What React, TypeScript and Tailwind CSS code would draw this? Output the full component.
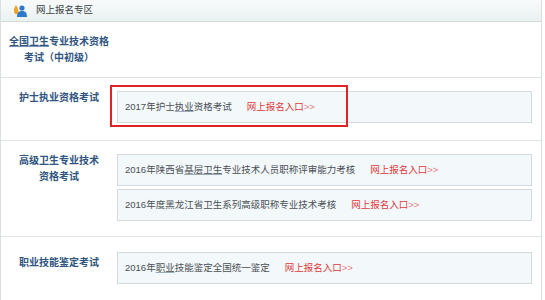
import React from "react";

const font = { fontFamily: '"Liberation Sans", "Noto Sans CJK SC", sans-serif' };

function Box({ children, link }: { children: React.ReactNode; link?: boolean }) {
  return (
    <div className="h-[32px] flex items-center border border-[#d3dade] bg-[#f3f8fa] pl-[7px] text-[9.5px] text-[#4a4f55]">
      <span>{children}</span>
      <span className="ml-[15px] text-[#e0383a]">
        网上报名入口<span className="text-[#e87c7e]">&gt;&gt;</span>
      </span>
    </div>
  );
}

function Label({ children }: { children: React.ReactNode }) {
  return (
    <div className="w-[116px] shrink-0 pt-[12px] text-center text-[10px] leading-[16px] font-bold text-[#2f5580]">
      {children}
    </div>
  );
}

export default function App() {
  return (
    <div className="w-[545px] h-[300px] bg-white overflow-hidden" style={font}>
      <div className="w-[542px] h-[300px] border-l border-r border-[#dadfe1] relative">
        {/* header */}
        <div className="h-[22px] flex items-center border-b border-[#d2dadc] bg-gradient-to-b from-[#f9fbfb] to-[#e9f1f1] pl-[12px]">
          <svg width="14" height="13" viewBox="0 0 14 13">
            <path d="M3 1 C1 4 0 7 2 10 L5 10 C6 7 5 4 3 1 Z" fill="#f3a21c" />
            <circle cx="9" cy="4" r="2.6" fill="#2d7bc8" />
            <path d="M4 13 C4 8.5 6 7 9 7 C12 7 14 8.5 14 13 Z" fill="#2d7bc8" />
          </svg>
          <span className="ml-[9px] text-[9.5px] text-[#3a3f44]">网上报名专区</span>
        </div>

        {/* row 1 */}
        <div className="h-[56px] flex border-b border-[#dfe3e5]">
          <Label>
            <span className="underline decoration-[#7a94b4]">全国卫生</span>专业技术资格
            <br />
            考试（中初级）
          </Label>
        </div>

        {/* row 2 */}
        <div className="flex border-b border-[#dfe3e5] pt-[13px] pb-[17px]">
          <Label>
            <span className="relative top-[-13px]">护士执业资格考试</span>
          </Label>
          <div className="flex-1 mr-[9px]">
            <Box>2017年护士<span className="underline decoration-[#9aaabb]">执业</span>资格考试</Box>
          </div>
        </div>

        {/* row 3 */}
        <div className="flex border-b border-[#dfe3e5] pt-[13px] pb-[15px]">
          <div className="w-[116px] shrink-0 text-center text-[10px] leading-[16px] font-bold text-[#2f5580] -mt-[1px]">
            高级卫生专业技术
            <br />
            资格考试
          </div>
          <div className="flex-1 mr-[9px] flex flex-col gap-[3px]">
            <Box>
              2016年陕西省<span className="underline decoration-[#9aaabb]">基层卫生</span>专业技术人员职称评审能力考核
            </Box>
            <Box>2016年度黑龙江省卫生系列高级职称专业技术考核</Box>
          </div>
        </div>

        {/* row 4 */}
        <div className="flex pt-[15px]">
          <div className="w-[116px] shrink-0 pt-[3px] text-center text-[10px] leading-[16px] font-bold text-[#2f5580]">
            职业技能鉴定考试
          </div>
          <div className="flex-1 mr-[9px]">
            <Box>
              2016年<span className="underline decoration-[#9aaabb]">职业</span>技能鉴定全国统一鉴定
            </Box>
          </div>
        </div>

        {/* red annotation */}
        <div className="absolute left-[109px] top-[85px] w-[238px] h-[42px] border-2 border-[#e02426]" />
      </div>
    </div>
  );
}
